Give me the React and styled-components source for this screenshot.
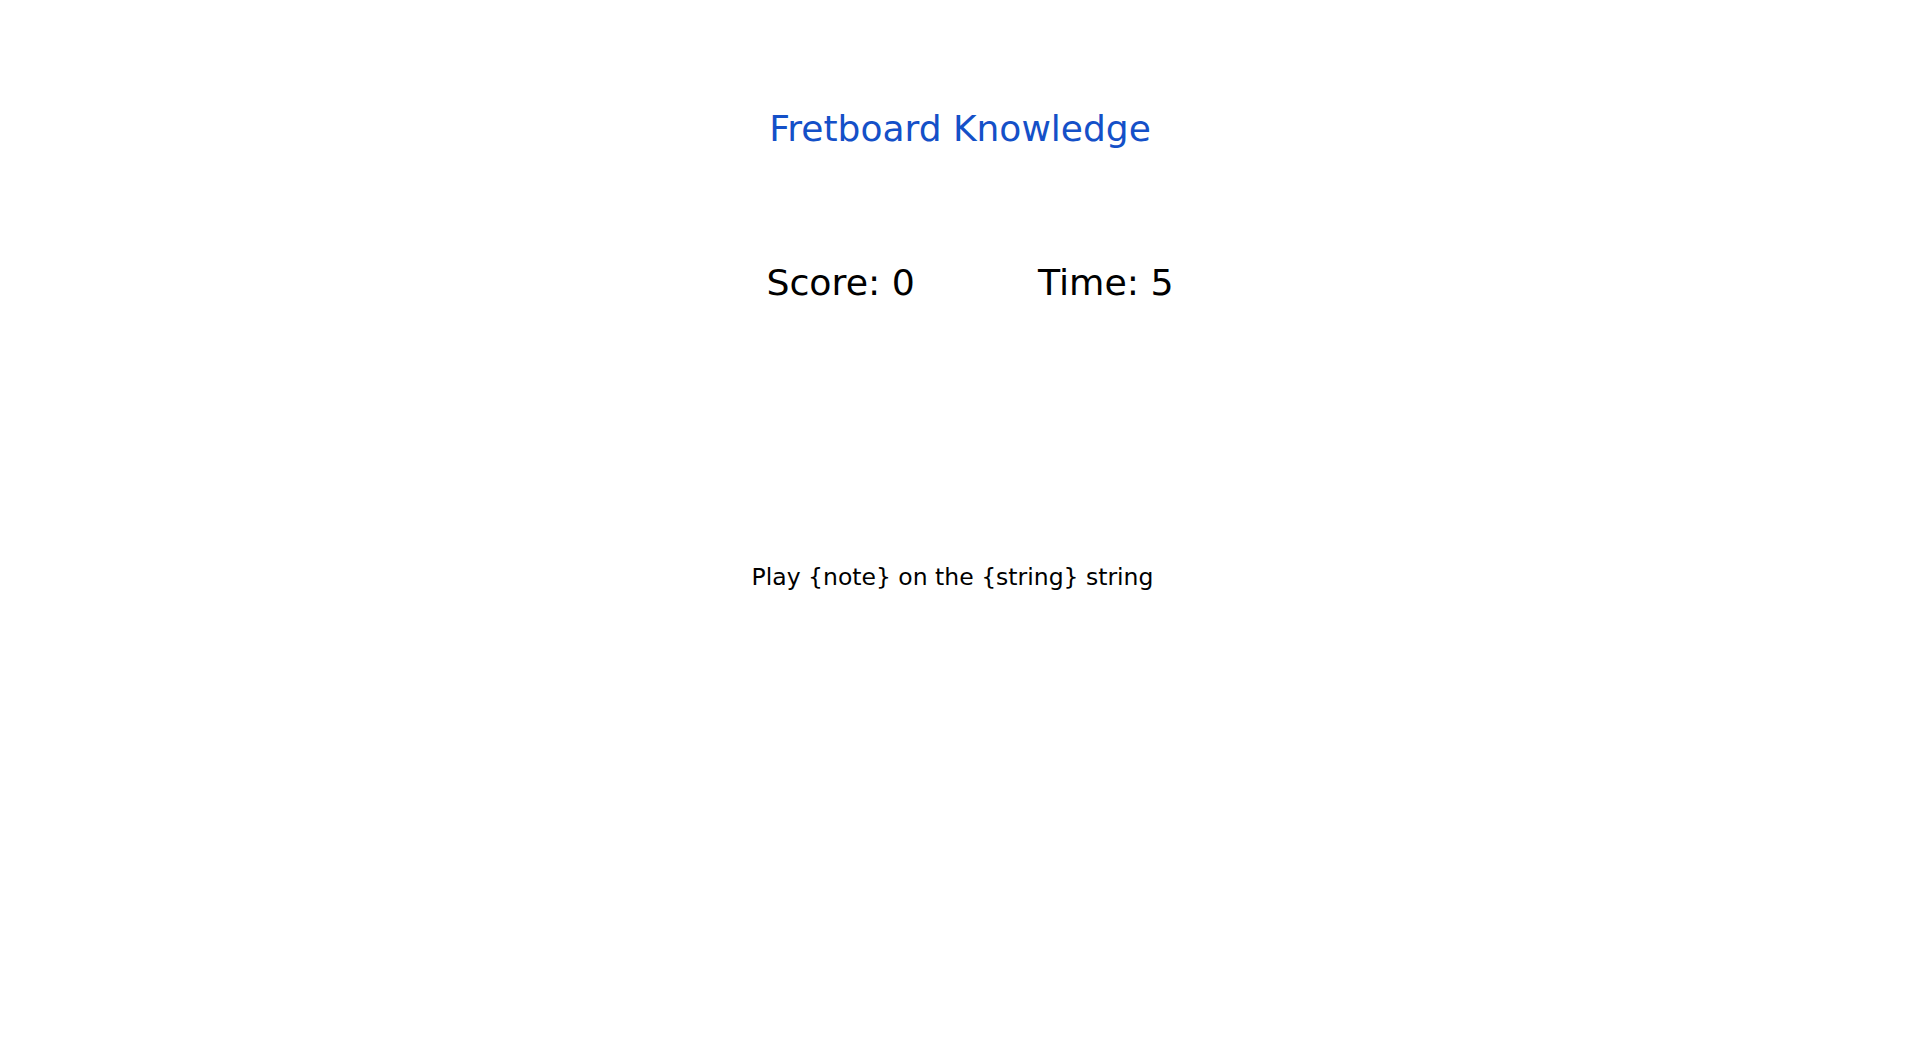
import React from "react";
import styled, { createGlobalStyle } from "styled-components";

const GlobalStyle = createGlobalStyle`
  html, body {
    margin: 0;
    padding: 0;
    background: #ffffff;
  }
  body {
    font-family: "DejaVu Sans", Verdana, sans-serif;
    color: #000000;
  }
`;

const Page = styled.main`
  display: flex;
  flex-direction: column;
  align-items: center;
  padding-top: 111px;
  min-height: 1057px;
  box-sizing: border-box;
`;

const Title = styled.h1`
  margin: 0;
  font-size: 36px;
  line-height: 36px;
  font-weight: normal;
  color: #1450c8;
`;

const Stats = styled.div`
  display: flex;
  gap: 123px;
  margin-top: 118px;
  padding-left: 20px;
`;

const Stat = styled.span`
  font-size: 36.3px;
  line-height: 36px;
`;

const Prompt = styled.p`
  margin: 265px 0 0;
  padding-right: 15px;
  font-size: 23.5px;
  line-height: 23px;
`;

export default function App() {
  const score = 0;
  const time = 5;
  return (
    <>
      <GlobalStyle />
      <Page>
        <Title>Fretboard Knowledge</Title>
        <Stats>
          <Stat>Score: {score}</Stat>
          <Stat>Time: {time}</Stat>
        </Stats>
        <Prompt>{"Play {note} on the {string} string"}</Prompt>
      </Page>
    </>
  );
}
